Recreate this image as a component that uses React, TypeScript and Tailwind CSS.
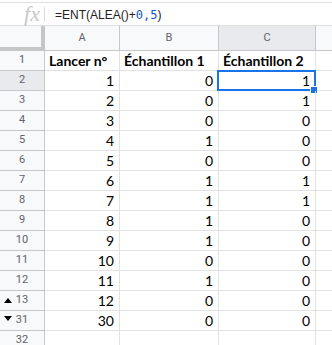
import React from "react";

const rows: { n: string; a: string; b: string; c: string; mark?: "up" | "down" }[] = [
  { n: "2", a: "1", b: "0", c: "1" },
  { n: "3", a: "2", b: "0", c: "1" },
  { n: "4", a: "3", b: "0", c: "0" },
  { n: "5", a: "4", b: "1", c: "0" },
  { n: "6", a: "5", b: "0", c: "0" },
  { n: "7", a: "6", b: "1", c: "1" },
  { n: "8", a: "7", b: "1", c: "1" },
  { n: "9", a: "8", b: "1", c: "0" },
  { n: "10", a: "9", b: "1", c: "0" },
  { n: "11", a: "10", b: "0", c: "0" },
  { n: "12", a: "11", b: "1", c: "0" },
  { n: "13", a: "12", b: "0", c: "0", mark: "up" },
  { n: "31", a: "30", b: "0", c: "0", mark: "down" },
];

const cellFont = { fontFamily: "Lato, 'Open Sans', sans-serif" };
const hdrFont = { fontFamily: "Roboto, 'Liberation Sans', sans-serif" };

export default function App() {
  return (
    <div className="w-[332px] h-[345px] overflow-hidden bg-white relative">
      <div className="h-[3px] border-b border-[#e0e0e0]" />
      <div className="h-[23px] border-b border-[#e0e0e0] flex items-center">
        <div
          className="w-[44px] h-full flex items-center justify-end pr-[4px] text-[22px] leading-none italic text-[#c8c8c8]"
          style={{ fontFamily: "'Liberation Serif', serif" }}
        >
          fx
        </div>
        <div className="w-px h-[15px] bg-[#dadce0]" />
        <div className="pl-[10px] pt-[1px] text-[12px] text-[#202124] whitespace-nowrap flex items-baseline">
          <span style={{ fontFamily: "'Liberation Sans', sans-serif" }}>=ENT(ALEA()+</span>
          <span className="text-[#1155cc] text-[12px]" style={{ fontFamily: "'DejaVu Sans Mono', monospace" }}>
            0,5
          </span>
          <span style={{ fontFamily: "'Liberation Sans', sans-serif" }}>)</span>
        </div>
      </div>
      <div
        className="grid grid-cols-[45px_75px_99px_97px_1fr] text-[#5f6368] text-[11px]"
        style={hdrFont}
      >
        <div className="h-[25px] bg-[#f8f9fa] border-r-[4px] border-b-[4px] border-[#c4c7c5]" />
        <div className="h-[25px] bg-[#f8f9fa] border-r border-b border-[#c7c7c7] flex items-center justify-center">A</div>
        <div className="h-[25px] bg-[#f8f9fa] border-r border-b border-[#c7c7c7] flex items-center justify-center">B</div>
        <div className="h-[25px] bg-[#e8eaed] border-r border-b border-[#c7c7c7] flex items-center justify-center">C</div>
        <div className="h-[25px] bg-[#f8f9fa] border-b border-[#c7c7c7]" />
      </div>
      <div className="grid grid-cols-[45px_75px_99px_97px_1fr] text-[14px] text-black" style={cellFont}>
        <div className="h-[20px] bg-[#f8f9fa] border-r border-b border-[#c7c7c7] flex items-center justify-center text-[11px] text-[#5f6368]" style={hdrFont}>1</div>
        <div className="h-[20px] border-r border-b border-[#e2e2e2] flex items-center pl-[4px] font-bold whitespace-nowrap">Lancer n°</div>
        <div className="h-[20px] border-r border-b border-[#e2e2e2] flex items-center pl-[4px] font-bold whitespace-nowrap">Échantillon 1</div>
        <div className="h-[20px] border-r border-b border-[#e2e2e2] flex items-center pl-[4px] font-bold whitespace-nowrap">Échantillon 2</div>
        <div className="h-[20px] border-b border-[#e2e2e2]" />
        {rows.map((r, i) => (
          <React.Fragment key={r.n}>
            <div
              className={`h-[20px] border-r border-b border-[#c7c7c7] flex items-center justify-center text-[11px] text-[#5f6368] relative ${i === 0 ? "bg-[#e8eaed]" : "bg-[#f8f9fa]"}`}
              style={hdrFont}
            >
              {r.mark === "up" && (
                <svg className="absolute left-[4px] top-[7px]" width="8" height="5" viewBox="0 0 8 5">
                  <path d="M0 5 L4 0 L8 5 Z" fill="#000" />
                </svg>
              )}
              {r.mark === "down" && (
                <svg className="absolute left-[4px] top-[5px]" width="8" height="5" viewBox="0 0 8 5">
                  <path d="M0 0 L8 0 L4 5 Z" fill="#000" />
                </svg>
              )}
              {r.n}
            </div>
            <div className="h-[20px] border-r border-b border-[#e2e2e2] flex items-center justify-end pr-[5px]">{r.a}</div>
            <div className="h-[20px] border-r border-b border-[#e2e2e2] flex items-center justify-end pr-[5px]">{r.b}</div>
            <div className="h-[20px] border-r border-b border-[#e2e2e2] flex items-center justify-end pr-[5px] relative">
              {r.c}
              {i === 0 && (
                <>
                  <div className="absolute left-[-2px] top-[-1px] right-[-1px] bottom-[-1px] border-2 border-[#1a73e8]" />
                  <div className="absolute right-[-3px] bottom-[-4px] w-[6px] h-[6px] bg-[#1a73e8] border border-white box-content" />
                </>
              )}
            </div>
            <div className="h-[20px] border-b border-[#e2e2e2]" />
          </React.Fragment>
        ))}
        <div className="h-[20px] bg-[#f8f9fa] border-r border-b border-[#c7c7c7] flex items-center justify-center text-[11px] text-[#5f6368]" style={hdrFont}>32</div>
        <div className="h-[20px] border-r border-b border-[#e2e2e2]" />
        <div className="h-[20px] border-r border-b border-[#e2e2e2]" />
        <div className="h-[20px] border-r border-b border-[#e2e2e2]" />
        <div className="h-[20px] border-b border-[#e2e2e2]" />
      </div>
    </div>
  );
}
